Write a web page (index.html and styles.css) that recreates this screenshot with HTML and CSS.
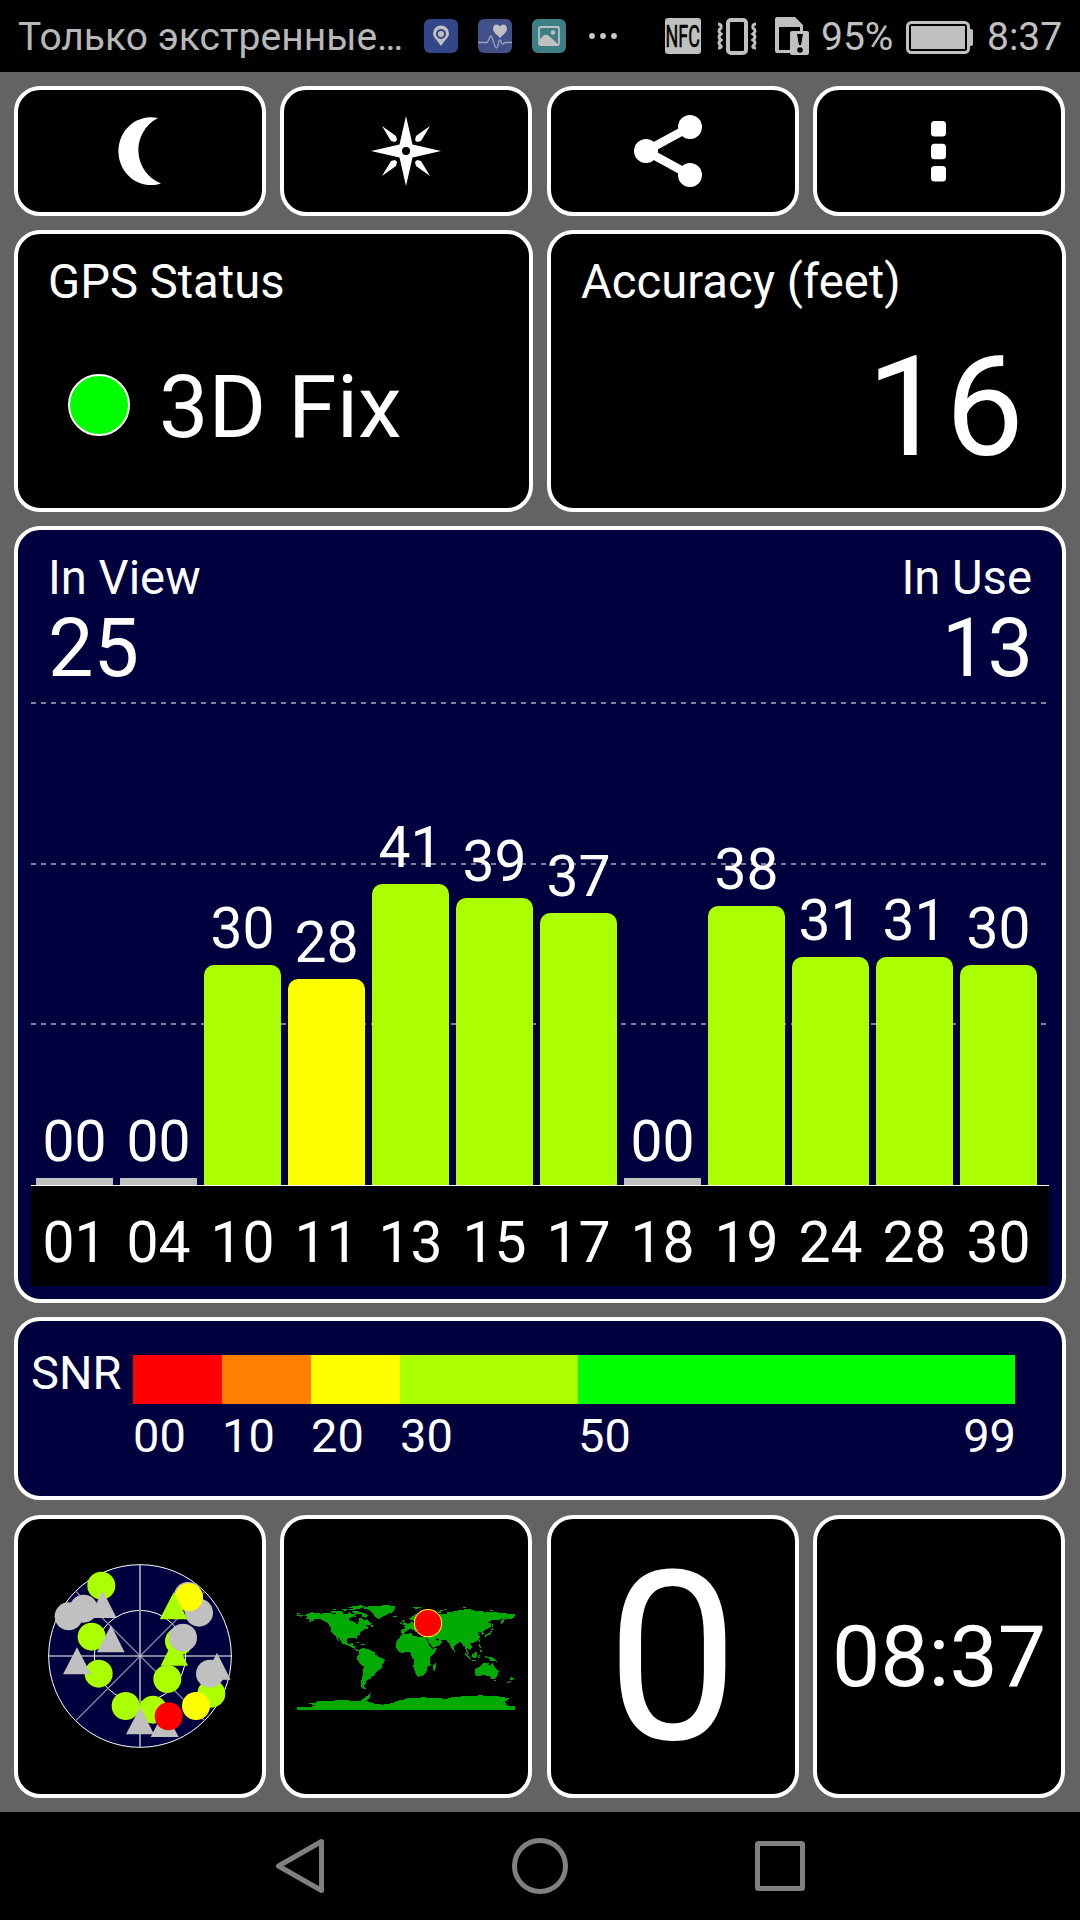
FILE: index.html
```html
<!DOCTYPE html>
<html lang="ru">
  <head>
    <meta charset="UTF-8" />
    <meta name="viewport" content="width=device-width, initial-scale=1.0" />
    <title>GPS Test</title>
    <link rel="stylesheet" href="styles.css">
  </head>
  <body>
    <!-- Status Bar -->
    <div class="status-bar">
      <span class="carrier">Только экстренные…</span>
      <svg class="icon-app" width="34" height="34" viewBox="0 0 34 34">
        <rect width="34" height="34" rx="6" fill="#31478a" />
        <path d="M17 27C13 21 9 18 9 14.500a8 8 0 0 1 16 0C25 18 21 21 17 27Z" fill="#c0c0c0" />
        <circle cx="17" cy="15" r="4" fill="#c0c0c0" stroke="#31478a" stroke-width="2" />
      </svg>
      <svg class="icon-app" width="34" height="34" viewBox="0 0 34 34">
        <rect width="34" height="34" rx="6" fill="#42508a" />
        <path d="M22 19C18 15 15 13 15 9.500C15 5 20 4 22 7.500C24 4 29 5 29 9.500C29 13 26 15 22 19Z" fill="#c0c0c0" />
        <path d="M0 23.500H9C11 23 11 17 13 17C15 17 16 29 18.500 29C20.500 29 20 21 22 21C24 21 23 26 25 25L27 23.500H34" fill="none" stroke="#9da3b8" stroke-width="1.300" />
      </svg>
      <svg class="icon-app" width="34" height="34" viewBox="0 0 34 34">
        <rect width="34" height="34" rx="6" fill="#3c7f86" />
        <rect x="7" y="8" width="20" height="18" rx="1.500" fill="none" stroke="#c0c0c0" stroke-width="1.800" />
        <path d="M8 20L11 17Q14 14 18 18L26 25H8Z" fill="#c0c0c0" />
        <circle cx="21" cy="13.500" r="2.200" fill="#c0c0c0" />
      </svg>
      <svg class="icon-dots" width="28" height="6" viewBox="0 0 28 6" fill="#c8c8c8">
        <circle cx="3" cy="3" r="2.900" />
        <circle cx="14" cy="3" r="2.900" />
        <circle cx="25" cy="3" r="2.900" />
      </svg>
      <span class="nfc"><span>NFC</span></span>
      <svg class="icon-vibrate" width="40" height="37" viewBox="0 0 40 37" fill="none" stroke="#c0c0c0">
        <rect x="11" y="2" width="18" height="33" rx="3" stroke-width="4" />
        <path d="M1 6Q5 6 4 10Q0 13 4 16Q0 19 4 22Q0 25 4 28Q5 30 1 30M39 6Q35 6 36 10Q40 13 36 16Q40 19 36 22Q40 25 36 28Q35 30 39 30" stroke-width="3" />
      </svg>
      <svg class="icon-sim" width="34" height="38" viewBox="0 0 34 38">
        <path d="M2 0H20L28 8V14H25V10H4V33H15V36H2Q0 36 0 34V2Q0 0 2 0Z" fill="#c0c0c0" />
        <rect x="15" y="14" width="19" height="24" rx="2" fill="#c0c0c0" />
        <path d="M22 17H28L26 28H24Z" fill="#000" />
        <circle cx="25" cy="33" r="2.800" fill="#000" />
      </svg>
      <span class="battery-level">95%</span>
      <svg class="icon-battery" width="67" height="33" viewBox="0 0 67 33">
        <rect x="1.500" y="1.500" width="61" height="30" rx="4" fill="none" stroke="#c0c0c0" stroke-width="3" />
        <rect x="5" y="5" width="54" height="23" fill="#c0c0c0" />
        <path d="M63 8H65Q67 8 67 10V23Q67 25 65 25H63Z" fill="#c0c0c0" />
      </svg>
      <span class="clock">8:37</span>
    </div>

    <div class="app">
      <!-- Toolbar -->
      <div class="row toolbar">
        <div class="card night">
          <svg width="43" height="68" viewBox="0 0 43 68" fill="#fff">
            <path d="M40 1A32.500 34 0 1 0 43 66.500A36 36 0 0 1 40 1Z" />
          </svg>
        </div>
        <div class="card">
          <svg width="70" height="70" viewBox="-35 -35 70 70" fill="#fff">
            <path d="M0 -35L6.500 -6.500L35 0L6.500 6.500L0 35L-6.500 6.500L-35 0L-6.500 -6.500Z" />
            <path d="M-24 -25L-10 -15L-9 -11L-11 -9L-15 -10ZM24 -25L10 -15L9 -11L11 -9L15 -10ZM-24 25L-10 15L-9 11L-11 9L-15 10ZM24 25L10 15L9 11L11 9L15 10Z" />
            <circle r="4" fill="#000" />
          </svg>
        </div>
        <div class="card share">
          <svg width="68" height="74" viewBox="0 0 68 74" fill="#fff">
            <path d="M56 13L12 37L56 61" fill="none" stroke="#fff" stroke-width="8.500" />
            <circle cx="12" cy="37" r="12" />
            <circle cx="56" cy="13" r="12" />
            <circle cx="56" cy="61" r="12" />
          </svg>
        </div>
        <div class="card">
          <svg width="15" height="61" viewBox="0 0 15 61" fill="#fff">
            <rect width="15" height="15.500" rx="3.500" />
            <rect y="22.700" width="15" height="15.500" rx="3.500" />
            <rect y="45" width="15" height="15.500" rx="3.500" />
          </svg>
        </div>
      </div>

      <!-- Fix status and accuracy -->
      <div class="row summary">
        <div class="card">
          <div class="label">GPS Status</div>
          <div class="fix">
            <span class="fix-light"></span>
            <span class="fix-text">3D Fix</span>
          </div>
        </div>
        <div class="card">
          <div class="label">Accuracy (feet)</div>
          <div class="accuracy">16</div>
        </div>
      </div>

      <!-- Signal chart -->
      <div class="card signal">
        <div class="signal-header">
          <div>
            <div class="label">In View</div>
            <div class="count">25</div>
          </div>
          <div class="in-use">
            <div class="label">In Use</div>
            <div class="count">13</div>
          </div>
        </div>
        <div class="plot">
          <div class="gridline line-75"></div>
          <div class="gridline line-50"></div>
          <div class="gridline line-25"></div>
          <div class="column"><span>00</span><div class="bar none" style="height: 7px"></div></div>
          <div class="column"><span>00</span><div class="bar none" style="height: 7px"></div></div>
          <div class="column"><span>30</span><div class="bar good" style="height: 220px"></div></div>
          <div class="column"><span>28</span><div class="bar fair" style="height: 206px"></div></div>
          <div class="column"><span>41</span><div class="bar good" style="height: 301px"></div></div>
          <div class="column"><span>39</span><div class="bar good" style="height: 287px"></div></div>
          <div class="column"><span>37</span><div class="bar good" style="height: 272px"></div></div>
          <div class="column"><span>00</span><div class="bar none" style="height: 7px"></div></div>
          <div class="column"><span>38</span><div class="bar good" style="height: 279px"></div></div>
          <div class="column"><span>31</span><div class="bar good" style="height: 228px"></div></div>
          <div class="column"><span>31</span><div class="bar good" style="height: 228px"></div></div>
          <div class="column"><span>30</span><div class="bar good" style="height: 220px"></div></div>
        </div>
        <div class="axis">
          <span>01</span>
          <span>04</span>
          <span>10</span>
          <span>11</span>
          <span>13</span>
          <span>15</span>
          <span>17</span>
          <span>18</span>
          <span>19</span>
          <span>24</span>
          <span>28</span>
          <span>30</span>
        </div>
      </div>

      <!-- SNR legend -->
      <div class="card snr">
        <div class="snr-title">SNR</div>
        <div class="snr-step"><div class="swatch red"></div><span>00</span></div>
        <div class="snr-step"><div class="swatch orange"></div><span>10</span></div>
        <div class="snr-step"><div class="swatch yellow"></div><span>20</span></div>
        <div class="snr-step"><div class="swatch lime"></div><span>30</span></div>
        <div class="snr-step"><div class="swatch green"></div><span>50</span><span class="snr-max">99</span></div>
      </div>

      <!-- Page tiles -->
      <div class="row tiles">
        <div class="card sky">
          <svg width="184" height="184" viewBox="54 73 552 552">
            <circle cx="330" cy="349" r="274" fill="#00003f" stroke="#fff" stroke-width="3" />
            <circle cx="330" cy="349" r="137" fill="none" stroke="#fff" stroke-width="3" />
            <path d="M137 155L524 543M524 155L137 543" stroke="#8080a0" stroke-width="4" />
            <path d="M330 75V623" stroke="#8f8faa" stroke-width="6" />
            <path d="M56 349H604" stroke="#fff" stroke-width="3" />
            <g fill="#aaff00">
              <circle cx="214" cy="138" r="42" />
              <circle cx="185" cy="291" r="42" />
              <circle cx="206" cy="402" r="42" />
              <circle cx="447" cy="305" r="42" />
              <circle cx="287" cy="499" r="42" />
              <circle cx="369" cy="510" r="42" />
              <circle cx="544" cy="462" r="42" />
              <path d="M433 296L474 378H392Z" />
              <circle cx="412" cy="418" r="42" />
            </g>
            <g fill="#c0c0c0">
              <circle cx="161" cy="207" r="42" />
              <circle cx="116" cy="230" r="42" />
              <circle cx="507" cy="219" r="42" />
              <circle cx="474" cy="169" r="42" />
              <circle cx="459" cy="294" r="42" />
              <path d="M561 339L602 420H520Z" />
              <circle cx="540" cy="402" r="42" />
              <path d="M218 153L260 235H177Z" />
              <path d="M243 257L284 338H201Z" />
              <path d="M141 323L183 404H99Z" />
              <path d="M404 511L446 592H362Z" />
              <path d="M331 502L372 584H288Z" />
            </g>
            <circle cx="477" cy="173" r="42" fill="#ffff00" />
            <path d="M431 158L472 239H389Z" fill="#aaff00" />
            <circle cx="498" cy="499" r="42" fill="#ffff00" />
            <circle cx="416" cy="530" r="42" fill="#ff0000" />
          </svg>
        </div>
        <div class="card">
          <!-- Map units are degrees: x = longitude, y = -latitude -->
          <svg width="218" height="107" viewBox="-180 -87 360 177" preserveAspectRatio="none" shape-rendering="crispEdges" fill="#00aa00">
            <!-- Europe and Asia -->
            <path d="M-9 -37L-9 -43L-2 -43.500L-1 -46L-4.500 -48.500L2 -51L5 -53.500L8 -54L8 -57L10 -57.500L11 -54L20 -54.500L21 -57L24 -59L29 -60L22 -60.500L21 -63L25 -65.500L21 -65L17 -61L18 -59L16 -56.500L13 -55.500L11 -59L7 -58L5 -61L12 -66L19 -70L26 -71L40 -67.500L40 -66L34 -66.500L38 -64L44 -66L46 -68L54 -68.500L60 -69L68 -68.500L67 -71L70 -73L73 -71L75 -72.500L80 -73.500L87 -75L98 -76.500L104 -77.500L113 -74L110 -73.500L127 -73.500L130 -71L140 -72.500L150 -71.500L160 -70L170 -69.500L180 -69L180 -65L177 -64.500L179 -62.500L170 -60L163 -60L162 -56L157 -51L156 -57L163 -61.500L155 -59.500L142 -59L135 -54.500L141 -53L140 -48L135 -44L130 -42.500L127 -39.500L129 -36L126.500 -34.500L125 -38L121 -39.500L118 -39L122 -37L119.500 -35L122 -31L120 -26L117 -23.500L110 -21L106 -20L109 -14L107 -10.500L105 -9L103 -11.500L100.500 -13.500L100 -9.500L103 -5L104 -1.500L101 -3L98.500 -8L98 -15L95 -16L91 -22.500L87 -21.500L80 -15.500L80 -11L77.500 -8L73 -17L72.500 -21L70 -21L67 -25L57 -26L51 -28L48 -30L50 -26.500L51.500 -24.500L56 -26L59.500 -22.500L55 -17L45 -13L43 -14L39 -21L35 -28L35 -32L36 -36.500L27 -37L27 -40.500L35 -42L41 -41L37 -45L39 -47L34 -46L31 -46.500L28 -42L26 -40.500L23 -40L22.500 -36.500L19.500 -40.500L13 -45.500L18 -41L16 -38L11 -43L8 -44.500L3 -42.500L-1 -38L-5 -36Z" />
            <path d="M47 -45L52 -47L51 -42L54 -40L53 -37L49 -38Z" fill="#000" />
            <!-- Africa -->
            <path d="M-6 -35.500L10 -37L11 -33.500L20 -31L32 -31L34 -27L37 -21L39 -15L43 -11.500L51 -12L47 -4L40 3L40.500 15L35 20L35 24L32.500 28L28 33L20 35L18 33L15 27L12 17L13.500 10L12 5L9 1L9 -4L5 -6L-4 -5L-8 -4.500L-13 -8L-17 -14L-17 -21L-13 -27L-9.500 -31ZM49 12L50.500 16L47 25L44 24L44 17Z" />
            <!-- North America -->
            <path d="M-168 -66L-162 -69.500L-156 -71.500L-141 -69.500L-128 -70.500L-115 -68.500L-108 -68L-96 -68L-94 -72L-90 -69L-82 -69.500L-82 -67L-87 -65L-94 -61L-94 -58.500L-85 -55.500L-82 -53L-79 -51.500L-79 -55L-77 -58L-78 -62L-73 -62.500L-70 -59L-65 -60L-61 -56L-56 -52.500L-60 -50L-67 -50L-65 -48L-61 -46L-66 -43.500L-70 -43.500L-71 -41.500L-75 -39.500L-76 -35L-81 -31.500L-80 -26L-83 -29L-90 -29.500L-97 -28L-97.500 -22L-95 -18.500L-91 -18.500L-90 -21L-87 -21.500L-88 -16L-83.500 -15L-83.500 -11L-78 -9L-79 -7.500L-83 -8.500L-88 -13L-94 -16L-105 -20L-107 -24L-113 -31L-114.500 -31L-110 -23.500L-113 -26L-117 -33L-124 -40L-124 -47L-130 -54L-139 -59.500L-150 -61L-153 -57.500L-164 -54.500L-157 -58.500L-165 -61.500L-162 -64ZM-59 -47.500L-53 -47L-56 -51Z" />
            <path d="M-180 -71L-175 -70L-179 -67.500L-170 -66.500L-173 -64.500L-180 -65ZM-84 -22.500L-75 -20L-79 -22.500ZM-73 -20L-68 -18.500L-71 -17.500L-74 -18.500Z" />
            <!-- Arctic islands -->
            <path d="M-125 -74.500L-116 -73L-105 -73L-103 -69L-115 -69.500L-124 -71.500ZM-90 -73.500L-80 -73.500L-68 -70L-62 -66.500L-66 -62.500L-72 -64.500L-73 -68L-86 -70ZM-85 -66L-81 -64L-86 -63ZM-122 -76.500L-110 -76L-111 -75ZM-106 -76.500L-98 -76.500L-100 -73ZM-95 -77L-80 -76L-82 -74.500L-93 -75.500ZM-97 -80L-76 -83L-63 -82.500L-75 -78.500L-80 -76.500L-87 -77.500L-90 -79Z" />
            <path d="M-72 -78.500L-62 -81.500L-44 -82.500L-30 -83.500L-18 -81.500L-19 -76L-22 -71.500L-32 -68L-42 -62.500L-44 -60.500L-49 -62L-53 -67L-55 -71L-60 -75.500ZM-24 -65.500L-15 -66L-14 -64.500L-19 -63.500ZM11 -79.500L27 -80.500L17 -77ZM52 -71.500L58 -75.500L68 -77L57 -73L57 -70.500ZM92 -80L106 -79L98 -78ZM138 -76L150 -75.500L140 -74Z" />
            <path d="M-5 -50L1 -51L1 -53L-3 -56L-2 -58.500L-5 -58.500L-6 -56L-3 -54L-5 -52.500ZM-10 -52L-6 -52.500L-6 -55L-9 -54.500Z" />
            <!-- South America -->
            <path d="M-78 -8.500L-72 -12.500L-62 -10.500L-52 -5.500L-50 -1L-44 2.500L-36 5.500L-35 9L-39 14L-41 22L-48 26L-53 33.500L-58 35L-57 38L-62 39L-65 42L-66 46L-69 50L-68 54L-65 55L-71 55L-75 50L-74 42L-71 30L-70 18L-76 14L-81 5L-80 1L-77 -4Z" />
            <!-- Australia and islands -->
            <path d="M114 22L122 18L126 14L131 11.500L137 12L136 15L140 17.500L142 11L146 18.500L153 26L151 33L147 38L141 38L138 34L135 34.500L131 31.500L124 33L115 34.500ZM145 41L148 41L147 43.500ZM173 35L178 38L175 41L172 40.500ZM172 41L174 42L168 46.500L167 45Z" />
            <path d="M95 -5.500L98 -4L106 3L106 6L101 2ZM105 6L115 8L114 9L106 7.500ZM109 -1.500L117 -7L118 -3L116 4L110 3ZM119 5L120 -1L125 -1.500L121 1L123 5L121 3ZM131 1L138 2L145 4L151 10L143 9L138 8L138 5L132 3ZM120 -18.500L122 -18.500L124 -13L121 -14ZM122 -10L126 -9L126 -6L122 -7ZM120 -25L122 -25L121 -22ZM80 -9.500L82 -7L80 -6Z" />
            <path d="M130 -33L133 -35.500L138 -37.500L140 -41L142 -40L140 -35.500L135 -33.500L131 -31ZM140 -42L145 -43.500L142 -45.500ZM142 -46L143 -54L144.500 -49Z" />
            <g transform="translate(-208.070 -124.680) scale(0.55046)">
              <!-- Antarctica -->
              <path d="M51 381H95L103 376L85 370L108 368L112 363H150L180 360L215 362L240 364L255 352L272 340L268 356L258 362L285 372L310 374L340 369L350 363L370 359L384 355L430 352L470 354L500 357L520 350L560 349L600 346L640 348L662 350L688 355L674 366L680 376L690 378H705V390H51Z" />
              <circle cx="444" cy="129" r="41" fill="#ff0000" stroke="#ffff00" stroke-width="3" shape-rendering="auto" />
            </g>
          </svg>
        </div>
        <div class="card speed">0</div>
        <div class="card time">08:37</div>
      </div>
    </div>

    <!-- Navigation Bar -->
    <div class="nav-bar">
      <svg width="56" height="60" viewBox="0 0 56 60">
        <path d="M49.500 5.500V54.500L6.500 30Z" />
      </svg>
      <svg width="56" height="60" viewBox="0 0 56 60">
        <circle cx="28" cy="30" r="25.500" />
      </svg>
      <svg width="56" height="60" viewBox="0 0 56 60">
        <rect x="5.500" y="7.500" width="45" height="45" rx="1" />
      </svg>
    </div>
  </body>
</html>
```
FILE: styles.css
```css
/* General Page Styles */
* {
  box-sizing: border-box;
}

body {
  margin: 0;
  width: 1080px;
  height: 1920px;
  overflow: hidden;
  background-color: #000;
  color: #fff;
  font-family: Roboto, sans-serif;
}

svg {
  display: block;
  flex: none;
}

/* Status Bar */
.status-bar {
  height: 72px;
  display: flex;
  align-items: center;
  padding-left: 18px;
  color: #b8b8b8;
  font-size: 39px;
  line-height: 72px;
  white-space: nowrap;
}

.carrier {
  width: 406px;
  padding-top: 2px;
}

.battery-level,
.clock {
  padding-top: 2px;
  color: #c0c0c0;
}

.icon-app {
  margin-right: 20px;
}

.icon-dots {
  margin: 0 48px 0 3px;
}

.nfc {
  width: 36px;
  height: 36px;
  margin-right: 16px;
  border-radius: 3px;
  background-color: #c0c0c0;
  color: #000;
  font-size: 32px;
  line-height: 37px;
  -webkit-text-stroke: 0.6px #000;
  display: flex;
  justify-content: center;
}

.nfc span {
  transform: scaleX(0.56);
}

.icon-vibrate {
  margin-right: 18px;
}

.icon-sim {
  margin-right: 12px;
}

.battery-level {
  width: 85px;
}

.icon-battery {
  margin: 2px 14px 0 0;
}

/* App Area */
.app {
  height: 1740px;
  padding: 14px;
  background-color: #636363;
  display: flex;
  flex-direction: column;
  gap: 14px;
}

.row {
  display: grid;
}

.card {
  border: 4px solid #fff;
  border-radius: 26px;
  background-color: #000;
}

.label {
  font-size: 47.2px;
  line-height: 56px;
}

/* Toolbar */
.toolbar {
  height: 130px;
  grid-template-columns: repeat(4, 252px);
  gap: 14.33px;
}

.toolbar .card {
  display: flex;
  align-items: center;
  justify-content: center;
}

.toolbar .night {
  padding-right: 2px;
}

.toolbar .share {
  padding-right: 10px;
}

/* Summary */
.summary {
  height: 282px;
  grid-template-columns: repeat(2, 1fr);
  gap: 14px;
}

.summary .card {
  padding: 20px 38px 0 30px;
}

.fix {
  display: flex;
  align-items: center;
  margin-top: 47px;
  padding-left: 20px;
  gap: 29px;
}

.fix-light {
  width: 62px;
  height: 62px;
  margin-bottom: 4px;
  border: 2px solid #fff;
  border-radius: 50%;
  background-color: #00ff00;
}

.fix-text {
  font-size: 88px;
  line-height: 100px;
}

.accuracy {
  margin-top: 22px;
  font-size: 140px;
  line-height: 150px;
  text-align: right;
}

/* Signal Chart */
.signal {
  height: 777px;
  padding: 20px 13px 0 13px;
  background-color: #00003f;
}

.signal-header {
  height: 152px;
  display: flex;
  justify-content: space-between;
  padding: 0 17px;
}

.in-use {
  text-align: right;
}

.count {
  font-size: 81px;
  line-height: 86px;
}

.in-use .count {
  margin-right: -1px;
}

.plot {
  position: relative;
  height: 484px;
  border-bottom: 1px solid #fff;
  display: flex;
  align-items: flex-end;
  gap: 7px;
  padding: 0 12px 0 5px;
}

.gridline {
  position: absolute;
  left: 0;
  width: 1015px;
  height: 2px;
  background: repeating-linear-gradient(90deg, #80809f 0 5px, transparent 5px 10px);
}

.line-75 {
  top: 0;
}

.line-50 {
  top: 161px;
}

.line-25 {
  top: 321px;
}

.column {
  position: relative;
  width: 77px;
  font-size: 57px;
  line-height: 60px;
  text-align: center;
}

.column span {
  display: block;
  margin-bottom: 6px;
}

.bar {
  border-radius: 10px 10px 0 0;
}

.bar.good {
  background-color: #aaff00;
}

.bar.fair {
  background-color: #ffff00;
}

.bar.none {
  background-color: #c0c0c0;
  border-radius: 0;
}

.axis {
  height: 100px;
  padding: 27px 12px 0 5px;
  background-color: #000;
  display: grid;
  grid-template-columns: repeat(12, 77px);
  gap: 7px;
  font-size: 57px;
  line-height: 60px;
  text-align: center;
}

/* SNR Legend */
.snr {
  height: 183px;
  padding: 24px 0 0 13px;
  background-color: #00003f;
  display: grid;
  grid-template-columns: 102px 89px 89px 89px 178px 437px;
  font-size: 47px;
  line-height: 56px;
}

.snr-step {
  display: flex;
  flex-wrap: wrap;
  justify-content: space-between;
  align-content: flex-start;
  padding-top: 10px;
}

.snr-max {
  margin-right: -1px;
}

.swatch {
  width: 100%;
  height: 49px;
  margin-bottom: 4px;
}

.red {
  background-color: #ff0000;
}

.orange {
  background-color: #ff8000;
}

.yellow {
  background-color: #ffff00;
}

.lime {
  background-color: #aaff00;
}

.green {
  background-color: #00ff00;
}

/* Page Tiles */
.tiles {
  height: 283px;
  margin-top: 1px;
  grid-template-columns: repeat(4, 252px);
  gap: 14.33px;
}

.tiles .card {
  display: flex;
  align-items: center;
  justify-content: center;
}

.tiles .sky {
  padding-bottom: 1px;
}

.speed {
  padding-top: 5px;
  font-size: 235px;
  line-height: 270px;
}

.time {
  font-size: 86px;
  line-height: 100px;
}

/* Navigation Bar */
.nav-bar {
  height: 108px;
  display: flex;
  justify-content: center;
  align-items: center;
  gap: 184px;
}

.nav-bar svg {
  fill: none;
  stroke: #808080;
  stroke-width: 5;
  stroke-linejoin: round;
}
```
